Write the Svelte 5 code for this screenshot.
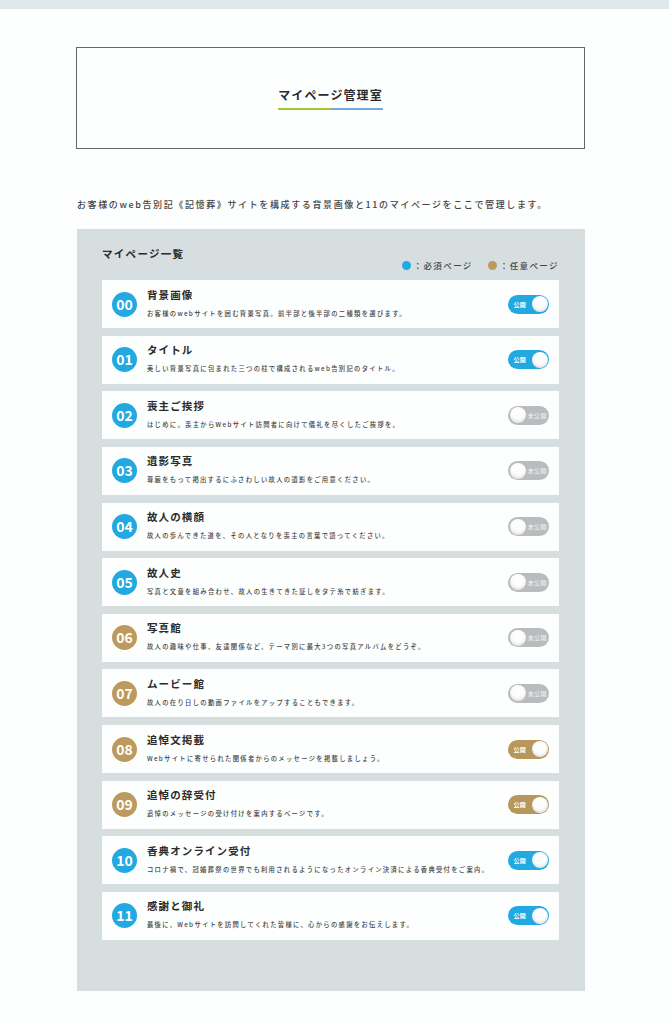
<script>
  const blue = 'blue';
  const gold = 'gold';

  const pages = [
    { no: '00', title: '背景画像', desc: 'お客様のwebサイトを囲む背景写真。前半部と後半部の二種類を選びます。', kind: blue, open: true },
    { no: '01', title: 'タイトル', desc: '美しい背景写真に包まれた三つの柱で構成されるweb告別記のタイトル。', kind: blue, open: true },
    { no: '02', title: '喪主ご挨拶', desc: 'はじめに。喪主からWebサイト訪問者に向けて儀礼を尽くしたご挨拶を。', kind: blue, open: false },
    { no: '03', title: '遺影写真', desc: '尊厳をもって掲出するにふさわしい故人の遺影をご用意ください。', kind: blue, open: false },
    { no: '04', title: '故人の横顔', desc: '故人の歩んできた道を、その人となりを喪主の言葉で語ってください。', kind: blue, open: false },
    { no: '05', title: '故人史', desc: '写真と文章を組み合わせ、故人の生きてきた証しをタテ糸で紡ぎます。', kind: blue, open: false },
    { no: '06', title: '写真館', desc: '故人の趣味や仕事、友達関係など、テーマ別に最大3つの写真アルバムをどうぞ。', kind: gold, open: false },
    { no: '07', title: 'ムービー館', desc: '故人の在り日しの動画ファイルをアップすることもできます。', kind: gold, open: false },
    { no: '08', title: '追悼文掲載', desc: 'Webサイトに寄せられた関係者からのメッセージを掲載しましょう。', kind: gold, open: true },
    { no: '09', title: '追悼の辞受付', desc: '追悼のメッセージの受け付けを案内するページです。', kind: gold, open: true },
    { no: '10', title: '香典オンライン受付', desc: 'コロナ禍で、冠婚葬祭の世界でも利用されるようになったオンライン決済による香典受付をご案内。', kind: blue, open: true },
    { no: '11', title: '感謝と御礼', desc: '最後に、Webサイトを訪問してくれた皆様に、心からの感謝をお伝えします。', kind: blue, open: true }
  ];
</script>

<div class="page">
  <div class="topband"></div>
  <main class="content">
    <header class="hero">
      <h1>マイページ管理室</h1>
    </header>

    <p class="intro">お客様のweb告別記《記憶葬》サイトを構成する背景画像と11のマイページをここで管理します。</p>

    <section class="panel">
      <div class="panel-head">
        <h2>マイページ一覧</h2>
        <div class="legend">
          <span class="legend-item"><i class="dot blue"></i>：必須ページ</span>
          <span class="legend-item"><i class="dot gold"></i>：任意ページ</span>
        </div>
      </div>

      <ul class="rows">
        {#each pages as p (p.no)}
          <li class="row">
            <span class="num {p.kind}">{p.no}</span>
            <div class="text">
              <h3>{p.title}</h3>
              <p>{p.desc}</p>
            </div>
            {#if p.open}
              <span class="toggle on {p.kind}"><em>公開</em><b></b></span>
            {:else}
              <span class="toggle off"><b></b><em>未公開</em></span>
            {/if}
          </li>
        {/each}
      </ul>
    </section>
  </main>
</div>

<style>
  :global(body) {
    margin: 0;
    background: #fdfefe;
  }
  .page {
    height: 1024px;
    overflow: hidden;
    font-family: "Noto Sans CJK JP", "Noto Sans", sans-serif;
    color: #2b2b2b;
  }
  .topband {
    height: 9px;
    background: #dfe9ec;
  }
  .content {
    width: 509px;
    margin-left: 76px;
    padding-top: 38px;
  }
  .hero {
    height: 100px;
    border: 1px solid #666;
    width: 507px;
    display: flex;
    align-items: center;
    justify-content: center;
  }
  .hero h1 {
    margin: 0;
    width: 105px;
    padding-bottom: 4px;
    text-align: center;
    white-space: nowrap;
    font-size: 12px;
    line-height: 18px;
    font-weight: 700;
    letter-spacing: 1.1px;
    border-bottom: 2px solid;
    border-image: linear-gradient(90deg, #a4c639 50%, #6fa9e4 50%) 1;
  }
  .intro {
    margin: 49px 0 0 1px;
    font-size: 9px;
    line-height: 14px;
    letter-spacing: 1.62px;
    font-weight: 500;
    color: #444;
    white-space: nowrap;
  }
  .panel {
    margin: 17px 0 0 1px;
    width: 508px;
    height: 762px;
    background: #d6dee0;
    padding: 17px 26px 0 25px;
    box-sizing: border-box;
  }
  .panel-head {
    height: 34px;
  }
  .panel-head h2 {
    margin: 0;
    font-size: 10.5px;
    line-height: 16px;
    font-weight: 700;
    letter-spacing: 1.3px;
  }
  .legend {
    display: flex;
    justify-content: flex-end;
    gap: 15px;
    margin-top: -3px;
    font-size: 8.5px;
    line-height: 12px;
    letter-spacing: 1.4px;
    font-weight: 500;
    color: #444;
  }
  .legend-item {
    display: flex;
    align-items: center;
    gap: 3px;
  }
  .dot {
    width: 9px;
    height: 9px;
    border-radius: 50%;
  }
  .dot.blue { background: #22a9e1; }
  .dot.gold { background: #bc9a5e; }
  .rows {
    list-style: none;
    margin: 0;
    padding: 0;
    display: flex;
    flex-direction: column;
    gap: 7.64px;
  }
  .row {
    height: 48px;
    background: #fdfefe;
    display: flex;
    align-items: center;
    padding: 0 10px;
    box-sizing: border-box;
  }
  .num {
    width: 25px;
    height: 25px;
    flex: none;
    border-radius: 50%;
    color: #fff;
    font-size: 14px;
    font-weight: 700;
    line-height: 25px;
    text-align: center;
    margin-right: 10px;
  }
  .num.blue { background: #22a9e1; }
  .num.gold { background: #bc9a5e; }
  .text {
    flex: 1;
    min-width: 0;
    padding-bottom: 2px;
  }
  .text h3 {
    margin: 0;
    font-size: 10.5px;
    line-height: 14px;
    font-weight: 700;
    letter-spacing: 1.1px;
  }
  .text p {
    margin: 7px 0 0;
    font-size: 6.3px;
    line-height: 10px;
    letter-spacing: 1.32px;
    font-weight: 500;
    color: #444;
    white-space: nowrap;
  }
  .toggle {
    width: 41px;
    height: 19px;
    flex: none;
    border-radius: 10px;
    display: flex;
    align-items: center;
    box-sizing: border-box;
    color: #fff;
    font-size: 6px;
    font-weight: 700;
  }
  .toggle em {
    font-style: normal;
    flex: 1;
    text-align: center;
    white-space: nowrap;
    letter-spacing: 0.3px;
  }
  .toggle b {
    width: 16px;
    height: 16px;
    flex: none;
    border-radius: 50%;
    background: #fdfdfd;
    box-shadow: inset 0 -2px 3px rgba(0, 0, 0, 0.1);
  }
  .toggle.on { padding: 0 1.5px 0 0; }
  .toggle.on.blue { background: #22a9e1; }
  .toggle.on.gold { background: #b8975b; }
  .toggle.off {
    padding: 0 0 0 1.5px;
    background: #b9bcbd;
    color: #e4e6e6;
  }
</style>
